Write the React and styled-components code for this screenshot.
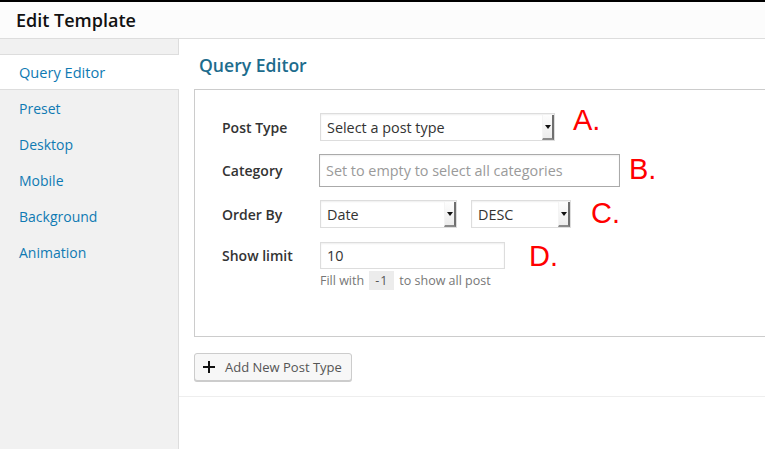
import React from "react";
import styled, { createGlobalStyle } from "styled-components";

const GlobalStyle = createGlobalStyle`
  html, body {
    margin: 0;
    padding: 0;
    background: #fff;
    overflow: hidden;
  }
  body {
    font-family: "Open Sans", "Noto Sans", sans-serif;
    border-top: 2px solid #000;
  }
  * { box-sizing: border-box; }
`;

const Header = styled.div`
  height: 37px;
  background: #fcfcfc;
  border-bottom: 1px solid #dddddd;
  display: flex;
  align-items: center;
  padding-left: 16px;
`;

const Title = styled.h1`
  margin: 0;
  font-size: 18px;
  font-weight: 600;
  color: #111;
`;

const Layout = styled.div`
  display: flex;
  height: 410px;
`;

const Sidebar = styled.ul`
  list-style: none;
  margin: 0;
  padding: 15px 0 0;
  width: 179px;
  flex-shrink: 0;
  background: #f1f1f1;
  border-right: 1px solid #dddddd;
`;

const NavItem = styled.li`
  height: 36px;
  display: flex;
  align-items: center;
  padding-left: 19px;
  font-size: ${(p) => (p.$active ? "14.6px" : "14px")};
  color: #0f7ab3;
  background: ${(p) => (p.$active ? "#fff" : "transparent")};
  border-top: 1px solid ${(p) => (p.$active ? "#dddddd" : "transparent")};
  border-bottom: 1px solid ${(p) => (p.$active ? "#dddddd" : "transparent")};
  margin-right: ${(p) => (p.$active ? "-1px" : "0")};
  position: relative;
`;

const Main = styled.div`
  flex: 1;
  min-width: 0;
  align-self: flex-start;
`;

const Panel = styled.div`
  padding: 15px 0 15px 15px;
  border-bottom: 1px solid #eeeeee;
`;

const Heading = styled.h2`
  margin: 0 0 13px 5px;
  font-size: 17.6px;
  line-height: 22px;
  font-weight: 600;
  color: #1d6c8d;
`;

const Box = styled.div`
  width: 600px;
  height: 248px;
  border: 1px solid #cccccc;
  background: #fff;
  padding: 23px 0 0 27px;
`;

const Row = styled.div`
  display: flex;
  align-items: ${(p) => (p.$top ? "flex-start" : "center")};
  margin-bottom: ${(p) => p.$gap || 13}px;
`;

const Label = styled.label`
  width: 98px;
  flex-shrink: 0;
  font-size: 14px;
  font-weight: 600;
  color: #333;
  line-height: ${(p) => p.$lh || "normal"};
`;

const Fields = styled.div`
  display: flex;
  align-items: center;
  gap: 14px;
`;

const SelectBox = styled.div`
  width: ${(p) => p.$w}px;
  height: 28px;
  border: 1px solid #dddddd;
  box-shadow: inset 0 1px 2px rgba(0, 0, 0, 0.07);
  background: #fff;
  display: flex;
  align-items: stretch;
  font-size: 14.4px;
  color: #333;
`;

const SelectText = styled.span`
  flex: 1;
  display: flex;
  align-items: center;
  padding-left: 6px;
`;

const Arrow = styled.span`
  width: 12px;
  margin: 1px 0 0;
  background: linear-gradient(#fdfdfd, #ececec);
  border-left: 1px solid #f4f4f4;
  border-right: 2px solid #6f6f6f;
  border-bottom: 2px solid #8a8a8a;
  display: flex;
  align-items: center;
  justify-content: center;
  &::after {
    content: "";
    border-left: 3px solid transparent;
    border-right: 3px solid transparent;
    border-top: 4px solid #111;
  }
`;

const Input = styled.input`
  width: ${(p) => p.$w}px;
  height: ${(p) => p.$h}px;
  border: 1px solid ${(p) => p.$border || "#dddddd"};
  box-shadow: inset 0 1px 2px rgba(0, 0, 0, 0.07);
  padding: 0 6px;
  font-family: "Open Sans", "Noto Sans", sans-serif;
  font-size: 14.4px;
  color: #333;
  margin-left: ${(p) => p.$ml || 0}px;
  &::placeholder {
    color: #9a9a9a;
  }
`;

const Mark = styled.span`
  font-family: "Liberation Sans", Arial, sans-serif;
  font-size: 29px;
  color: #ff0000;
  margin-left: ${(p) => p.$gap}px;
  line-height: 20px;
  transform: translateY(${(p) => p.$dy || 0}px);
`;

const Help = styled.p`
  margin: 2px 0 0;
  font-size: 12.5px;
  color: #777;
  display: flex;
  align-items: center;
  gap: 5px;
`;

const Code = styled.code`
  font-family: "Open Sans", "Noto Sans", sans-serif;
  background: #ececec;
  color: #555;
  padding: 1px 6px;
  font-size: 12.5px;
  letter-spacing: 1px;
`;

const Button = styled.button`
  margin-top: 16px;
  height: 28px;
  width: 158px;
  display: flex;
  align-items: center;
  gap: 10px;
  padding: 0 0 0 8px;
  background: #f7f7f7;
  border: 1px solid #cccccc;
  border-radius: 3px;
  box-shadow: 0 1px 0 #cccccc;
  font-family: "Open Sans", "Noto Sans", sans-serif;
  font-size: 13px;
  color: #555;
`;

const Select = ({ w, value }) => (
  <SelectBox $w={w}>
    <SelectText>{value}</SelectText>
    <Arrow />
  </SelectBox>
);

const navItems = ["Query Editor", "Preset", "Desktop", "Mobile", "Background", "Animation"];

export default function App() {
  return (
    <>
      <GlobalStyle />
      <Header>
        <Title>Edit Template</Title>
      </Header>
      <Layout>
        <Sidebar>
          {navItems.map((item, i) => (
            <NavItem key={item} $active={i === 0}>
              {item}
            </NavItem>
          ))}
        </Sidebar>
        <Main>
          <Panel>
            <Heading>Query Editor</Heading>
            <Box>
              <Row $gap={13}>
                <Label>Post Type</Label>
                <Select w={235} value="Select a post type" />
                <Mark $gap={18} $dy={-7}>A.</Mark>
              </Row>
              <Row $gap={13}>
                <Label>Category</Label>
                <Input
                  $w={301}
                  $h={33}
                  $border="#aaaaaa"
                  $ml={-1}
                  placeholder="Set to empty to select all categories"
                />
                <Mark $gap={9} $dy={-2}>B.</Mark>
              </Row>
              <Row $gap={14}>
                <Label>Order By</Label>
                <Fields>
                  <Select w={137} value="Date" />
                  <Select w={100} value="DESC" />
                </Fields>
                <Mark $gap={20} $dy={-1}>C.</Mark>
              </Row>
              <Row $top $gap={0}>
                <Label $lh="27px">Show limit</Label>
                <div>
                  <Input $w={185} $h={27} defaultValue="10" />
                  <Help>
                    Fill with <Code>-1</Code> to show all post
                  </Help>
                </div>
                <Mark $gap={24} $dy={4}>D.</Mark>
              </Row>
            </Box>
            <Button>
              <svg width="12" height="12" viewBox="0 0 12 12">
                <path d="M6 0v12M0 6h12" stroke="#111" strokeWidth="2" />
              </svg>
              Add New Post Type
            </Button>
          </Panel>
        </Main>
      </Layout>
    </>
  );
}
